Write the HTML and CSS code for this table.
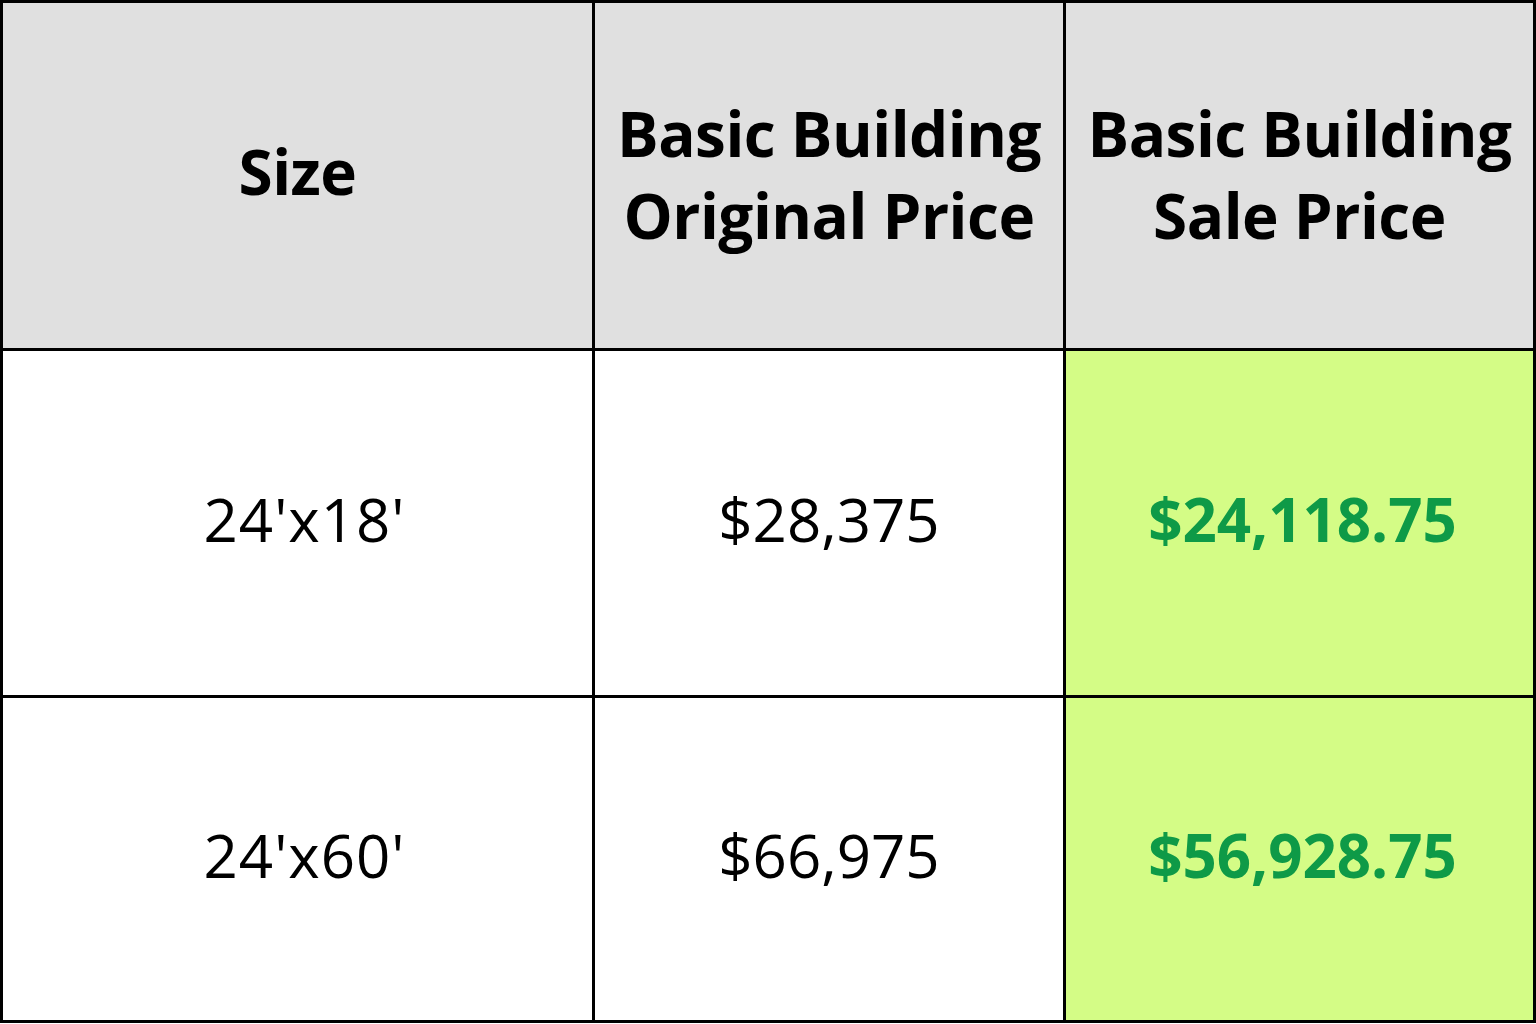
FILE: index.html
```html
<!DOCTYPE html>
<html>
<head>
<meta charset="utf-8">
<link rel="stylesheet" href="styles.css">
</head>
<body>
<div class="table">
  <div class="cell head single">Size</div>
  <div class="cell head">Basic Building<br>Original Price</div>
  <div class="cell head">Basic Building<br>Sale Price</div>

  <div class="cell data dim">24'x18'</div>
  <div class="cell data">$28,375</div>
  <div class="cell data sale">$24,118.75</div>

  <div class="cell data dim">24'x60'</div>
  <div class="cell data">$66,975</div>
  <div class="cell data sale">$56,928.75</div>
</div>
</body>
</html>
```
FILE: styles.css
```css
html, body {
  margin: 0;
  padding: 0;
  background: #ffffff;
}
.table {
  display: grid;
  grid-template-columns: 589px 468px 467px;
  grid-template-rows: 345px 344px 322px;
  gap: 3px;
  padding: 3px;
  width: 1530px;
  background: #000000;
  font-family: "Open Sans", "Noto Sans", sans-serif;
  color: #000000;
}
.cell {
  display: flex;
  align-items: center;
  justify-content: center;
  text-align: center;
  background: #ffffff;
  padding-bottom: 8px;
}
.head {
  background: #e0e0e0;
  font-weight: 700;
  font-size: 62px;
  line-height: 82px;
  letter-spacing: -0.5px;
  padding-bottom: 4px;
}
.head.single {
  padding-bottom: 10px;
}
.data {
  font-size: 60px;
  font-weight: 400;
}
.dim {
  letter-spacing: 1px;
  padding-left: 14px;
}
.sale {
  background: #d4fc86;
  color: #0e9a47;
  font-weight: 700;
  padding-left: 6px;
}
```
